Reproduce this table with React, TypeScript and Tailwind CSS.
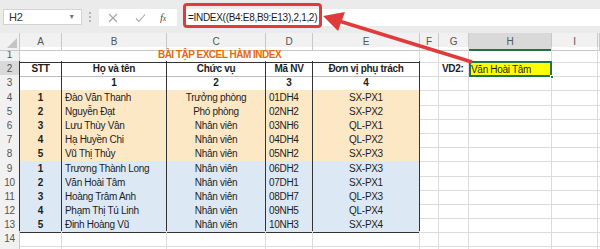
import React from "react";

const GRID = "grid grid-cols-[20px_42px_105px_99px_47px_107px_19px_30px_83px_46px_1fr] h-[14.2px]";
const LETTERS = ["A", "B", "C", "D", "E", "F", "G", "H", "I", ""];

interface Staff {
  stt: string;
  name: string;
  role: string;
  code: string;
  unit: string;
}

const GROUP_ONE: Staff[] = [
  { stt: "1", name: "Đào Văn Thanh", role: "Trưởng phòng", code: "01DH4", unit: "SX-PX1" },
  { stt: "2", name: "Nguyễn Đạt", role: "Phó phòng", code: "02NH2", unit: "SX-PX2" },
  { stt: "3", name: "Lưu Thùy Vân", role: "Nhân viên", code: "03NH6", unit: "QL-PX1" },
  { stt: "4", name: "Hạ Huyền Chi", role: "Nhân viên", code: "04DH4", unit: "QL-PX2" },
  { stt: "5", name: "Vũ Thị Thủy", role: "Nhân viên", code: "05NH2", unit: "SX-PX3" },
];

const GROUP_TWO: Staff[] = [
  { stt: "1", name: "Trương Thành Long", role: "Nhân viên", code: "06DH2", unit: "SX-PX3" },
  { stt: "2", name: "Văn Hoài Tâm", role: "Nhân viên", code: "07DH1", unit: "SX-PX1" },
  { stt: "3", name: "Hoàng Trâm Anh", role: "Nhân viên", code: "08DH7", unit: "QL-PX3" },
  { stt: "4", name: "Phạm Thị Tú Linh", role: "Nhân viên", code: "09NH5", unit: "QL-PX4" },
  { stt: "5", name: "Đinh Hoàng Vũ", role: "Nhân viên", code: "10NH3", unit: "SX-PX4" },
];

const BASE = "flex items-center overflow-hidden whitespace-nowrap px-[3px] border-r border-b";
const PLAIN = `${BASE} border-r-[#dcdcdc] border-b-[#dcdcdc]`;

function RowHeader({ n, table, selected }: { n?: number; table?: boolean; selected?: boolean }) {
  return (
    <div
      className={`flex items-center justify-center border-b border-r border-b-[#d6d6d6] text-[#555] ${
        table ? "border-r-[#333]" : "border-r-[#c8c8c8]"
      } ${selected ? "bg-[#d9d9d9]" : "bg-[#f1f1f1]"}`}
    >
      {n}
    </div>
  );
}

function Blank({ count }: { count: number }) {
  return (
    <>
      {Array.from({ length: count }).map((_, i) => (
        <div key={i} className={PLAIN} />
      ))}
    </>
  );
}

function DataRow({ n, item, tone, last }: { n: number; item: Staff; tone: string; last?: boolean }) {
  const bottom = last ? "border-b-[#333]" : "border-b-black/25";
  const cell = `${BASE} border-r-[#333] ${bottom} ${tone}`;
  return (
    <div className={GRID}>
      <RowHeader n={n} table />
      <div className={`${cell} justify-center font-bold`}>{item.stt}</div>
      <div className={cell}>{item.name}</div>
      <div className={`${cell} justify-center`}>{item.role}</div>
      <div className={cell}>{item.code}</div>
      <div className={`${cell} justify-center`}>{item.unit}</div>
      <Blank count={5} />
    </div>
  );
}

function FormulaBar() {
  return (
    <div className="flex h-[33px] items-start bg-[#ebebeb] pt-[9px]">
      <div className="ml-[3px] flex h-[16px] w-[79px] items-center justify-between border border-[#d2d2d2] bg-white pl-[5px] pr-[6px] text-[11px] text-[#333]">
        <span>H2</span>
        <span className="text-[7px] text-[#777]">▼</span>
      </div>
      <div className="ml-[6px] flex h-[16px] w-[4px] flex-col items-center justify-center gap-[2px]">
        <span className="h-[2px] w-[2px] bg-[#b5b5b5]" />
        <span className="h-[2px] w-[2px] bg-[#b5b5b5]" />
        <span className="h-[2px] w-[2px] bg-[#b5b5b5]" />
      </div>
      <div className="ml-[7px] flex h-[17px] w-[78px] items-center bg-white">
        <svg width="10" height="10" viewBox="0 0 10 10" className="ml-[9px]">
          <path d="M1 1 L9 9 M9 1 L1 9" stroke="#a5a5a5" strokeWidth="1.1" />
        </svg>
        <svg width="11" height="10" viewBox="0 0 11 10" className="ml-[17px]">
          <path d="M1 5.5 L4 8.5 L10 1.5" stroke="#a5a5a5" strokeWidth="1.1" fill="none" />
        </svg>
        <span className="ml-[14px] font-['Liberation_Serif',serif] text-[11px] italic text-[#555]">
          f<span className="text-[8px]">x</span>
        </span>
      </div>
      <div className="ml-[6px] flex h-[17px] flex-1 items-center bg-white pl-[5px] text-[#1a1a1a]">
        =INDEX((B4:E8,B9:E13),2,1,2)
      </div>
    </div>
  );
}

function ColumnHeaders() {
  return (
    <div className="grid h-[14px] grid-cols-[20px_42px_105px_99px_47px_107px_19px_30px_83px_46px_1fr] bg-[#f1f1f1] text-[#555]">
      <div className="relative border-b border-r border-[#c8c8c8]">
        <svg width="10" height="10" viewBox="0 0 10 10" className="absolute bottom-[2px] right-[2px]">
          <polygon points="10,0 10,10 0,10" fill="#c4c4c4" />
        </svg>
      </div>
      {LETTERS.map((letter, i) =>
        letter === "H" ? (
          <div
            key={i}
            className="flex items-center justify-center border-b-2 border-r border-b-[#217346] border-r-[#c8c8c8] bg-[#d9d9d9] pt-[1px]"
          >
            {letter}
          </div>
        ) : (
          <div key={i} className="flex items-center justify-center border-b border-r border-[#c8c8c8]">
            {letter}
          </div>
        ),
      )}
    </div>
  );
}

export default function App() {
  const head = `${BASE} justify-center font-bold border-r-[#333]`;
  return (
    <div className="relative h-[249px] w-[600px] overflow-hidden bg-white font-['Liberation_Sans',Arial,sans-serif] text-[10px] tracking-[-0.3px] text-[#1d1d1d]">
      <FormulaBar />
      <ColumnHeaders />

      <div className={GRID}>
        <RowHeader n={1} />
        <div className={`${BASE} col-span-5 justify-center border-r-[#dcdcdc] border-b-[#333] font-bold tracking-[-0.5px] text-[#e36c0a]`}>
          BÀI TẬP EXCEL HÀM INDEX
        </div>
        <Blank count={5} />
      </div>

      <div className={GRID}>
        <RowHeader n={2} table selected />
        <div className={`${head} border-b-[#bdbdbd]`}>STT</div>
        <div className={`${head} border-b-[#bdbdbd]`}>Họ và tên</div>
        <div className={`${head} border-b-[#bdbdbd]`}>Chức vụ</div>
        <div className={`${head} border-b-[#bdbdbd]`}>Mã NV</div>
        <div className={`${head} border-b-[#bdbdbd]`}>Đơn vị phụ trách</div>
        <div className={PLAIN} />
        <div className={`${PLAIN} font-bold`}>VD2:</div>
        <div className="relative flex items-center whitespace-nowrap bg-[#ffff00] px-[2px] outline-2 -outline-offset-2 outline-[#217346]">
          Văn Hoài Tâm
          <span className="absolute -bottom-[2px] -right-[2px] h-[4px] w-[4px] border border-white bg-[#217346]" />
        </div>
        <Blank count={2} />
      </div>

      <div className={GRID}>
        <RowHeader n={3} table />
        <div className={`${head} border-b-[#333]`} />
        <div className={`${head} border-b-[#333]`}>1</div>
        <div className={`${head} border-b-[#333]`}>2</div>
        <div className={`${head} border-b-[#333]`}>3</div>
        <div className={`${head} border-b-[#333]`}>4</div>
        <Blank count={5} />
      </div>

      {GROUP_ONE.map((item, i) => (
        <DataRow key={`a${i}`} n={4 + i} item={item} tone="bg-[#fde8c6]" />
      ))}
      {GROUP_TWO.map((item, i) => (
        <DataRow key={`b${i}`} n={9 + i} item={item} tone="bg-[#dce9f5]" last={i === GROUP_TWO.length - 1} />
      ))}

      <div className={GRID}>
        <RowHeader n={14} />
        <Blank count={10} />
      </div>
      <div className={GRID}>
        <RowHeader />
        <Blank count={10} />
      </div>

      {/* annotation: red box round the formula and arrow pointing from H2 */}
      <div className="pointer-events-none absolute left-[183px] top-[3px] h-[25px] w-[139px] rounded-[4px] border-[3px] border-[#e03b3b]" />
      <svg className="pointer-events-none absolute left-0 top-0" width="600" height="249" viewBox="0 0 600 249">
        <line x1="472" y1="62" x2="339" y2="21" stroke="#e03b3b" strokeWidth="3.5" />
        <polygon points="323,16 345,12 338,31" fill="#e03b3b" />
      </svg>
    </div>
  );
}
